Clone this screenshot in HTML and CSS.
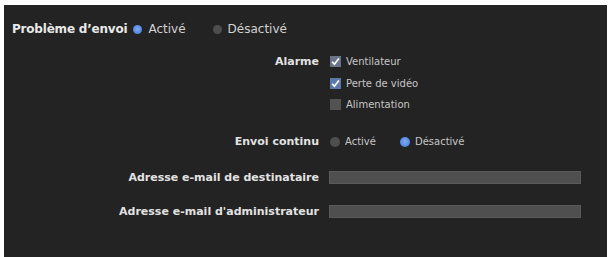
FILE: index.html
```html
<!DOCTYPE html>
<html lang="fr">
<head>
    <meta charset="UTF-8">
    <meta name="viewport" content="width=device-width, initial-scale=1.0">
    <title>Notification</title>
    <link rel="stylesheet" href="styles.css">
</head>
<body>
    <div class="panel">
        <div class="panel__top">
            <span class="panel__title">Problème d’envoi</span>
            <label class="choice choice_big">
                <span class="radio radio_on"></span>Activé
            </label>
            <label class="choice choice_big choice_far">
                <span class="radio"></span>Désactivé
            </label>
        </div>

        <div class="form">
            <div class="form__label form__label_alarm">Alarme</div>
            <div class="form__checks">
                <label class="choice">
                    <span class="check check_on check_dim">
                        <svg viewBox="0 0 11 11" width="11" height="11"><path d="M2.2 5.8 L4.4 8.2 L8.9 2.4" fill="none" stroke="#fff" stroke-width="1.7"/></svg>
                    </span>Ventilateur
                </label>
                <label class="choice">
                    <span class="check check_on">
                        <svg viewBox="0 0 11 11" width="11" height="11"><path d="M2.2 5.8 L4.4 8.2 L8.9 2.4" fill="none" stroke="#fff" stroke-width="1.7"/></svg>
                    </span>Perte de vidéo
                </label>
                <label class="choice">
                    <span class="check"></span>Alimentation
                </label>
            </div>

            <div class="form__label form__label_send">Envoi continu</div>
            <div class="form__radios">
                <label class="choice">
                    <span class="radio"></span>Activé
                </label>
                <label class="choice choice_far2">
                    <span class="radio radio_on"></span>Désactivé
                </label>
            </div>

            <div class="form__label form__label_mail">Adresse e-mail de destinataire</div>
            <div class="form__field form__field_mail"><input type="text" class="form__input"></div>

            <div class="form__label form__label_admin">Adresse e-mail d'administrateur</div>
            <div class="form__field form__field_admin"><input type="text" class="form__input"></div>
        </div>
    </div>
</body>
</html>
```

FILE: styles.css
```css
*{box-sizing:border-box}
body{margin:0;background:#fff;font-family:"DejaVu Sans",Verdana,sans-serif}
.panel{margin:5px 2px 0 4px;height:252px;background:#232323;padding:16px 0 0 8px;color:#cfcfcf}
.panel__top{display:flex;align-items:center;height:16px}
.panel__title{font-size:12px;font-weight:700;color:#e8e8e8;letter-spacing:-.2px;margin-right:6px}
.choice{display:flex;align-items:center;font-size:10px;color:#c6c6c6;white-space:nowrap}
.choice_big{font-size:12px;color:#d2d2d2}
.choice_far{margin-left:27px}
.choice_far2{margin-left:24px}
.radio{display:inline-block;width:10px;height:10px;border-radius:50%;background:#4e4e4e;margin-right:5px}
.choice_big .radio{width:9px;height:9px;margin-right:6px}
.radio_on{background:radial-gradient(circle at 50% 45%,#7eaaf2 0,#5b8ee6 55%,#4a7acc 100%)}
.check{display:inline-flex;width:11px;height:11px;background:#525252;margin-right:5px}
.check_on{background:#5c78a8}
.check_dim{background:#6a7488}
.form{display:grid;grid-template-columns:307px 1fr;column-gap:11px;align-items:center}
.form__label{font-size:11px;font-weight:700;color:#e2e2e2;text-align:right}
.form__label_alarm{align-self:start;margin-top:14px;line-height:21px}
.form__checks{margin-top:14px}
.form__checks .choice{height:21.5px}
.form__label_send,.form__radios{margin-top:16px;height:20px;line-height:20px}
.form__radios{display:flex;align-items:center}
.form__label_mail,.form__field_mail{margin-top:16px;height:20px;line-height:20px}
.form__label_admin,.form__field_admin{margin-top:14px;height:20px;line-height:20px}
.form__field{display:flex;align-items:center}
.form__input{width:252px;height:13px;background:#4f4f4f;border:1px solid #5a5a5a;outline:0;padding:0;margin-left:-1px}
```
